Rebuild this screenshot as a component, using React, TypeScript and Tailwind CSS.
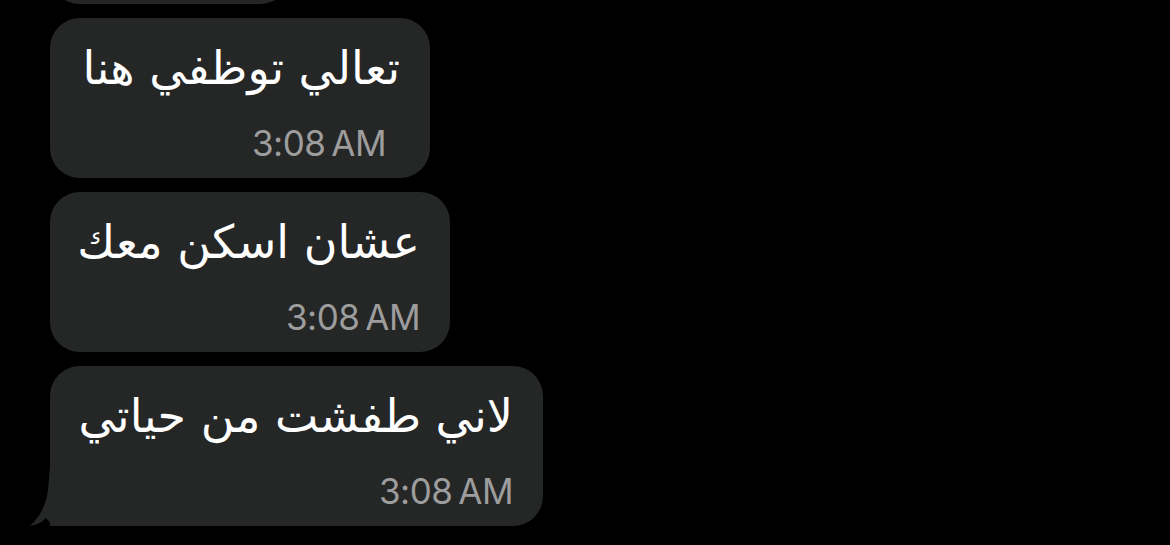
import React from "react";

type Msg = { text: string; time: string; width: string; timePad: string; tail?: boolean };

const messages: Msg[] = [
  { text: "تعالي توظفي هنا", time: "3:08\u202FAM", width: "w-[380px]", timePad: "mr-[14px]" },
  { text: "عشان اسكن معك", time: "3:08\u202FAM", width: "w-[400px]", timePad: "mr-0" },
  { text: "لاني طفشت من حياتي", time: "3:08\u202FAM", width: "w-[493px]", timePad: "mr-0", tail: true },
];

// Little hook that sticks out of the last bubble in a group
function Tail() {
  return (
    <svg
      className="absolute -left-[20px] bottom-0"
      width="44"
      height="60"
      viewBox="0 0 44 60"
    >
      <path
        d="M20 0 L44 0 L44 60 L26 60 C22 58 18 55 16 52 C11 57 6 59 0 60 C9 52 16 40 18 24 Z"
        fill="#252626"
      />
    </svg>
  );
}

function Bubble({ msg }: { msg: Msg }) {
  return (
    <div
      className={`relative ${msg.width} h-[160px] rounded-[30px] ${
        msg.tail ? "rounded-bl-none" : ""
      } bg-[#252626] flex flex-col items-end px-[30px]`}
    >
      {msg.tail && <Tail />}
      <div
        dir="rtl"
        className="relative pt-[18px] text-[46px] leading-[64px] text-white font-['DejaVu_Sans',sans-serif] whitespace-nowrap"
      >
        {msg.text}
      </div>
      <div
        className={`relative ${msg.timePad} mt-[23px] text-[35px] leading-[40px] tracking-[-0.5px] text-[#9d9d9d] font-['Inter',sans-serif]`}
      >
        {msg.time}
      </div>
    </div>
  );
}

export default function App() {
  return (
    <div className="w-[1170px] h-[545px] bg-black overflow-hidden">
      <div className="flex flex-col gap-[14px] pl-[50px]">
        {/* earlier message, mostly scrolled off */}
        <div className="w-[240px] h-[160px] -mt-[156px] rounded-[30px] bg-[#252626]" />
        {messages.map((m, i) => (
          <Bubble key={i} msg={m} />
        ))}
      </div>
    </div>
  );
}
